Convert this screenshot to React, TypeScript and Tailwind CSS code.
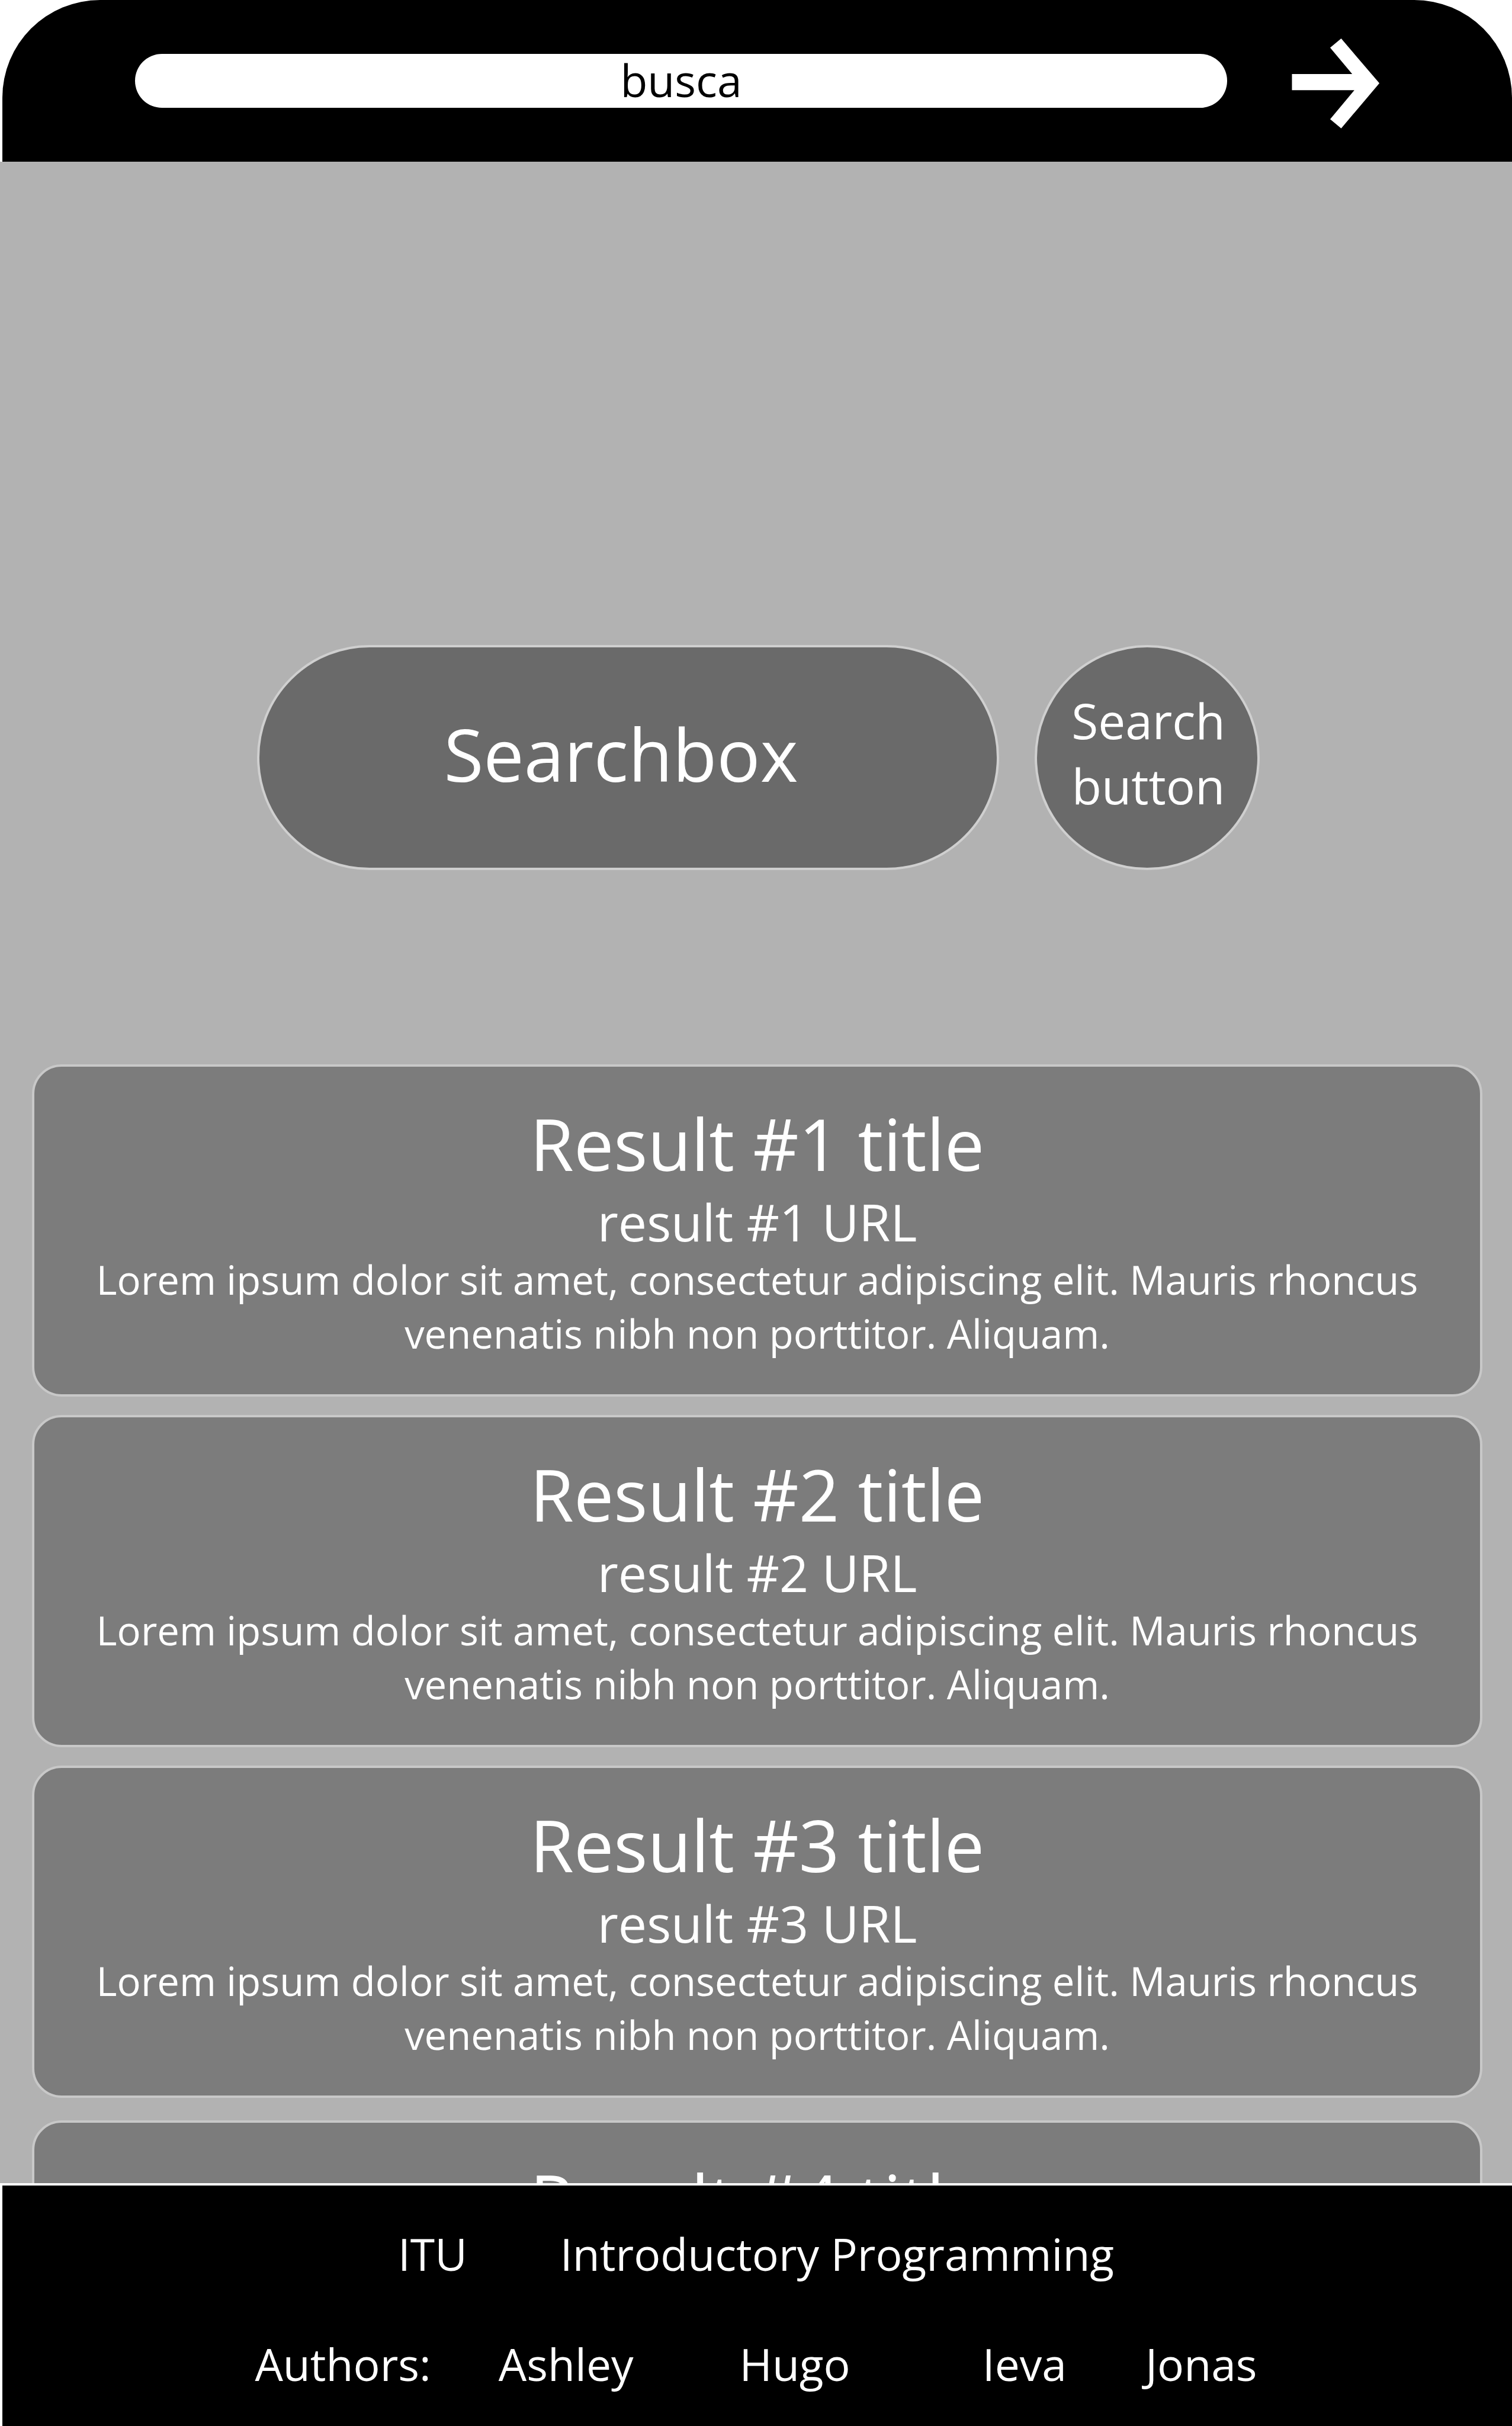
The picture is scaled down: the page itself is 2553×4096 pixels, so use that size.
import React from "react";

const description =
  "Lorem ipsum dolor sit amet, consectetur adipiscing elit. Mauris rhoncus venenatis nibh non porttitor. Aliquam.";

type Result = { title: string; url?: string; description?: string };

const results: Result[] = [
  { title: "Result #1 title", url: "result #1 URL", description },
  { title: "Result #2 title", url: "result #2 URL", description },
  { title: "Result #3 title", url: "result #3 URL", description },
  { title: "Result #4 title" },
];

function ArrowIcon() {
  return (
    <svg viewBox="0 0 164 168" className="h-[153px] w-[149px]" fill="currentColor" aria-hidden="true">
      <path d="M92 1 L163 84 L92 168 L71.500 151 L116.500 97 H0.500 V67 H112.500 L71.500 18 Z" />
    </svg>
  );
}

function Header() {
  return (
    <header className="ml-1 flex h-[273px] shrink-0 items-center gap-[109px] rounded-t-[165px] bg-black pr-[223px] pl-[224px]">
      <input
        type="text"
        aria-label="Address"
        defaultValue="busca"
        className="h-[91px] min-w-0 flex-1 rounded-full bg-white pb-1 text-center text-[75px] leading-[87px] text-black outline-none"
      />
      <button type="button" aria-label="Go" className="mt-[7px] shrink-0 text-white">
        <ArrowIcon />
      </button>
    </header>
  );
}

function SearchForm() {
  return (
    <form
      className="mx-auto flex w-full max-w-[1697px] items-center gap-[60px] pl-1"
      onSubmit={(e) => e.preventDefault()}
    >
      <input
        type="text"
        aria-label="Searchbox"
        placeholder="Searchbox"
        className="h-[380px] min-w-0 flex-1 rounded-full border-4 border-[#cfcfcf] bg-[#6a6a6a] pr-6 pb-3 text-center text-[122px] text-white outline-none placeholder:text-white placeholder:opacity-100"
      />
      <button
        type="submit"
        className="size-[380px] shrink-0 rounded-full border-4 border-[#cfcfcf] bg-[#6a6a6a] pb-4 pl-1 text-[82px] leading-[110px] text-white"
      >
        Search
        <br />
        button
      </button>
    </form>
  );
}

function ResultCard({ result }: { result: Result }) {
  return (
    <article className="min-h-[561px] shrink-0 rounded-[50px] border-4 border-[#c8c8c8] bg-[#7c7c7c] px-[88px] pt-[50px] text-center text-white last:mt-[7px]">
      <h2 className="text-[120px] leading-[160px]">{result.title}</h2>
      {result.url && (
        <a href="#" className="block text-[86px] leading-[104px]">
          {result.url}
        </a>
      )}
      {result.description && <p className="text-[67px] leading-[91px]">{result.description}</p>}
    </article>
  );
}

function Footer() {
  return (
    <footer className="flex h-[410px] shrink-0 flex-col gap-[88px] border-t-4 border-l-4 border-white bg-black pt-[66px] pr-1 text-[75px] leading-[98px] text-white">
      <div className="flex justify-center gap-[157px]">
        <span>ITU</span>
        <span>Introductory Programming</span>
      </div>
      <div className="flex justify-center">
        <span className="mr-[114px]">Authors:</span>
        <span className="mr-[179px]">Ashley</span>
        <span className="mr-[223px]">Hugo</span>
        <span className="mr-[133px]">Ieva</span>
        <span>Jonas</span>
      </div>
    </footer>
  );
}

export default function App() {
  return (
    <div className="flex h-screen flex-col bg-white font-['Open_Sans','Noto_Sans',sans-serif]">
      <Header />
      <main className="min-h-0 flex-1 overflow-y-auto bg-[#b2b2b2] pt-[816px] pr-[50px] pl-[54px] [scrollbar-width:none]">
        <SearchForm />
        <section aria-label="Results" className="mt-[328px] flex flex-col gap-[31px]">
          {results.map((result) => (
            <ResultCard key={result.title} result={result} />
          ))}
        </section>
      </main>
      <Footer />
    </div>
  );
}
